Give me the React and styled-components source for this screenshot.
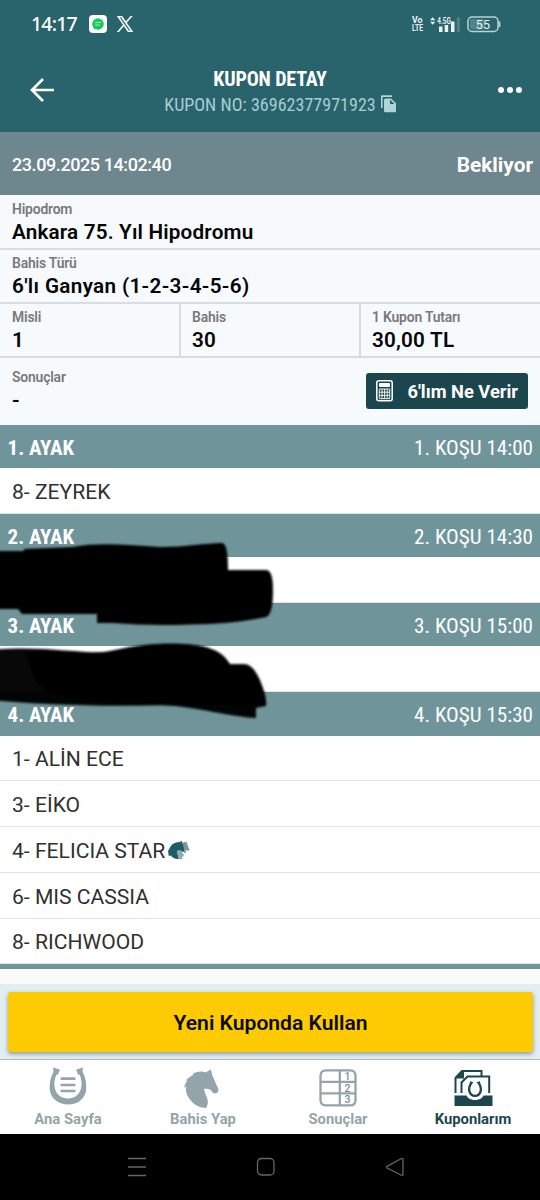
import React from "react";
import styled, { createGlobalStyle } from "styled-components";

const teal = "#29636b";
const band = "#6f959b";
const ink = "#1c464d";
const muted = "#93a5aa";

const GlobalStyle = createGlobalStyle`
  * { box-sizing: border-box; }
  body { margin: 0; background: #000; font-family: Roboto, "Liberation Sans", sans-serif; }
  svg { display: block; flex: none; }
`;

const Screen = styled.main`
  width: 540px;
  height: 1200px;
  display: flex;
  flex-direction: column;
  overflow: hidden;
  background: #fafafa;
`;

const StatusBar = styled.div`
  height: 48px;
  flex: none;
  display: flex;
  align-items: center;
  padding: 0 38px 0 31px;
  background: ${teal};
  color: #fff;
`;
const Clock = styled.span`
  font: 500 19.5px/24px "Noto Sans", sans-serif;
  letter-spacing: -0.8px;
  width: 58px;
  white-space: nowrap;
`;
const StatusIcons = styled.div`
  display: flex;
  align-items: center;
  gap: ${(p) => p.$gap}px;
  margin-left: ${(p) => (p.$end ? "auto" : 0)};
`;

const Header = styled.header`
  height: 84px;
  flex: none;
  display: grid;
  grid-template-columns: 1fr auto 1fr;
  align-items: center;
  padding: 0 18px 0 29px;
  background: ${teal};
`;
const Titles = styled.div`
  display: flex;
  flex-direction: column;
  align-items: center;
  padding-top: 3px;
  margin-left: -11px;
`;
const HeaderEnd = styled.div`
  justify-self: end;
`;
const Condensed = styled.span`
  font-family: "Roboto Condensed", Roboto, sans-serif;
  font-stretch: 75%;
  font-weight: ${(p) => p.$weight || 400};
  font-size: ${(p) => p.$size}px;
  line-height: 26px;
  letter-spacing: ${(p) => p.$track || 0}px;
  color: ${(p) => p.$color || "#fff"};
  white-space: nowrap;
`;
const CouponNo = styled.div`
  display: flex;
  align-items: center;
  gap: 5px;
  margin-right: -21px;
`;

const StateBar = styled.section`
  height: 63px;
  flex: none;
  display: flex;
  justify-content: space-between;
  align-items: center;
  padding: 2px 7px 0 12px;
  background: #6e868d;
  color: #fff;
`;
const Stamp = styled.span`
  font-size: 18px;
  font-weight: 500;
  letter-spacing: -0.42px;
`;
const State = styled.strong`
  font-size: 20.8px;
  font-weight: 700;
`;

const Info = styled.section`
  flex: none;
  padding-top: 1px;
  background: #f6fafc;
`;
const InfoRow = styled.div`
  display: grid;
  grid-template-columns: ${(p) => p.$columns || "1fr"};
  height: 54px;
  border-bottom: 2px solid #d6dee4;
`;
const Cell = styled.div`
  padding: 4px 0 0 12px;
  & + & { border-left: 2px solid #d6dee4; padding-left: 11px; }
`;
const Label = styled.div`
  font-size: 13.9px;
  line-height: 18px;
  font-weight: 600;
  letter-spacing: -0.18px;
  color: #77797b;
`;
const Value = styled.div`
  font-size: 20.7px;
  line-height: 24px;
  margin-top: 2px;
  font-weight: 600;
  letter-spacing: ${(p) => p.$track ?? 0.2}px;
  color: #050505;
`;
const ResultRow = styled.div`
  height: 66.7px;
  display: flex;
  justify-content: space-between;
  align-items: flex-start;
  padding: 10px 12px 0 12px;
`;
const CalcButton = styled.button`
  width: 162px;
  height: 36px;
  margin-top: 5px;
  display: flex;
  align-items: center;
  justify-content: space-between;
  border: 0;
  border-radius: 3px;
  padding: 0 10px 0 9.500px;
  background: ${ink};
  color: #fff;
  font: 700 18.3px Roboto, sans-serif;
  white-space: nowrap;
`;

const Legs = styled.section`
  flex: none;
  display: flex;
  flex-direction: column;
  position: relative;
`;
const LegHead = styled.div`
  height: 43.4px;
  display: flex;
  justify-content: space-between;
  align-items: center;
  padding: 2.600px 7px 0 7.500px;
  background: ${band};
`;
const Horse = styled.div`
  height: 45.75px;
  display: flex;
  align-items: center;
  gap: 3px;
  padding: 2px 0 0 12px;
  border-bottom: 1px solid #dbe5ea;
  background: #fff;
  font-size: 21.1px;
  font-weight: 400;
  color: #303030;
`;
const LegsEnd = styled.div`
  height: 4.5px;
  background: ${band};
`;
const Scribble = styled.svg`
  position: absolute;
  left: 0;
  top: 110px;
`;

const ActionBar = styled.div`
  margin-top: auto;
  height: 75px;
  flex: none;
  padding: 8px 7px 7px 8px;
  background: #e3eef0;
`;
const ActionButton = styled.button`
  width: 100%;
  height: 60px;
  border: 0;
  border-radius: 3px;
  padding-top: 1px;
  background: #fecb02;
  box-shadow: 0 2px 4px rgba(50, 70, 90, 0.5);
  font: 600 21.1px Roboto, sans-serif;
  color: #0c0c0c;
`;
const Tabs = styled.nav`
  height: 75px;
  flex: none;
  display: flex;
  border-top: 1px solid #a9bcc4;
  background: #fff;
`;
const Tab = styled.div`
  flex: 1;
  display: flex;
  flex-direction: column;
  align-items: center;
  padding: 7px 0 0 1px;
  gap: 2px;
  font-size: 14.8px;
  line-height: 18px;
  font-weight: 700;
  color: ${(p) => (p.$active ? ink : muted)};
`;
const TabGlyph = styled.span`
  height: 41px;
`;
const SystemNav = styled.div`
  height: 66px;
  flex: none;
  display: flex;
  justify-content: space-between;
  align-items: center;
  padding: 0 135px 0 127px;
  background: #000;
`;

const ChatIcon = () => (
  <svg width="18" height="18" viewBox="0 0 18 18">
    <rect width="18" height="18" rx="4" fill="#fff" />
    <circle cx="9" cy="9" r="5.8" fill="#18c95c" />
    <path d="M5 14.6 4.4 11l3 2.6z" fill="#18c95c" />
    <path d="M6.2 7.8l6-.5M6.2 10h4.4" stroke="#a9f0c4" strokeWidth="1" />
  </svg>
);
const XIcon = () => (
  <svg width="16" height="16" viewBox="0 0 24 24" fill="#fff" stroke="#fff" strokeWidth="1">
    <path d="M14.2 10.2 22.9 0h-2.1l-7.5 8.8L7.3 0H.3l9.200 13.300L.3 24h2.100l8-9.400L16.800 24h7zM11.400 13.500l-.900-1.300L3.100 1.600h3.200l6 8.500.900 1.300 7.800 11.100h-3.200z" />
  </svg>
);
const VolteIcon = () => (
  <svg width="13" height="26" viewBox="0 0 13 26" fill="#e9f3f3" fontFamily="Roboto, sans-serif" fontWeight="700">
    <text x="1" y="12.300" fontSize="8.300" textLength="10.500" lengthAdjust="spacingAndGlyphs">Vo</text>
    <text x="1" y="20.200" fontSize="8.300" textLength="11" lengthAdjust="spacingAndGlyphs">LTE</text>
  </svg>
);
const SignalIcon = () => (
  <svg width="31" height="20" viewBox="0 -2 31 20" fill="#e9f3f3">
    <path d="M0 4.300 2.700 1.300l2.700 3zM0 5.700h5.400l-2.700 3z" />
    <path d="M9 10.500h3.500v5.500H9zM14.700 9h3.500v7h-3.500zM21 5.500h3.500V16H21z" />
    <path d="M26.800 1.300h3V16h-3z" opacity=".2" />
    <text x="7.300" y="7.500" fontSize="9" fontWeight="700" fontFamily="Roboto, sans-serif" textLength="13.500" lengthAdjust="spacingAndGlyphs">4.5G</text>
  </svg>
);
const BatteryIcon = () => (
  <svg width="35" height="17" viewBox="0 0 35 17">
    <rect x="1" y="1" width="30" height="14.500" rx="4" fill="none" stroke="#b8d4d5" strokeWidth="1.500" />
    <path d="M3 3h14v10.500H5a2 2 0 0 1-2-2z" fill="#4e858c" />
    <path d="M32.500 5.500v5.500" stroke="#b8d4d5" strokeWidth="1.800" />
    <text x="16" y="12.700" textAnchor="middle" fill="#e9f3f3" fontSize="12.500" fontFamily="Roboto, sans-serif" letterSpacing=".3">55</text>
  </svg>
);
const BackIcon = () => (
  <svg width="26" height="26" viewBox="0 0 26 26" fill="none" stroke="#fff" strokeWidth="2.700">
    <path d="M25 13H3M14 2 3 13l11 11" />
  </svg>
);
const MoreIcon = () => (
  <svg width="24" height="8" viewBox="0 0 24 8" fill="#fff">
    <circle cx="3" cy="4" r="3" /><circle cx="12" cy="4" r="3" /><circle cx="21" cy="4" r="3" />
  </svg>
);
const CopyIcon = () => (
  <svg width="16" height="20" viewBox="0 0 16 20" fill="#add5d8">
    <path d="M0 1.500Q0 .3 1.300.3H11v1.600H1.600V13H0z" />
    <path fillRule="evenodd" d="M3 5q0-1.500 1.500-1.500h5.500L15 8.300V16q0 1.300-1.300 1.300H4.500Q3 17.300 3 16zM9 4.700V9h4.500z" />
  </svg>
);
const CalcIcon = () => (
  <svg width="17" height="22" viewBox="0 0 17 22" fill="none" stroke="#fff">
    <rect x=".8" y=".8" width="15.400" height="20" rx="2" strokeWidth="1.500" />
    <path d="M3.500 3.500h10v3h-10z" fill="#fff" />
    <path d="M3.300 9h10.400v9.700H3.300zM3.300 12.200h10.400M3.300 15.400h10.400M6 9v9.700M8.600 9v9.700M11.200 9v9.700" strokeWidth=".9" />
  </svg>
);
const HorsesIcon = () => (
  <svg width="22" height="19" viewBox="0 0 22 19">
    <path d="M0 10 1.500 7.500C3 3.500 6.500 1 11 1.200L13.500 0l1 2c1.500 2 2.500 4 2.500 6.500L15.500 11l-4-1.500C9 10 9.500 13 11 18 7.500 18.500 4.500 17 3 14.500L.8 15z" fill="#1f5c64" />
    <path d="M14.500 2 16.500.7l1.300.8L18.500.3l.8 3 2.200 6-1.500.7-1.700-1.500-.3 3-1.700 1c.2-4-.8-7-1.800-10.500z" fill="#75999e" />
    <path d="M8.700 10.500 11 8.800l2.500 1.400 2.500 4-.5 1.500-1.500-.4.700 3H11.200c-.5-2.500-2-4.500-2.500-7.800z" fill="#8daeb2" />
  </svg>
);
const HomeIcon = () => (
  <svg width="39" height="39" viewBox="0.500 .5 39 39" fill={muted}>
    <path d="m4.500 1 7 2.200L9.300 8.300 8 8.100C3 19 7 32 19.500 32S36 19 31 8.100l-1.300.200L27.500 3.200l7-2.200-.5 4.500C38 12 38 20 37.500 25 35 34 28 38 19.500 38S3.500 33 1.500 25C.5 18 2 11 5 5.500z" />
    <path d="M13.200 12.200h12.600M13.200 18.500h12.600M13.200 24.500h12.600" stroke={muted} strokeWidth="2.700" strokeLinecap="round" />
  </svg>
);
const HorseIcon = () => (
  <svg width="39" height="41" viewBox="2.300 -2.500 39 41" fill={muted}>
    <path d="M28.800 0c1 1.700 1.500 3.500 1.400 5.300 2.300 3.800 3.600 8.800 6 13l.5 1.500c.3 2.200-1 4.200-3.500 4.200-2.600 0-3-2.900-5-3.900-1.700-.8-3.100-.1-5.200-1.300-1.200 3 1.800 7 2.700 10.700.9 3.300.5 6.500-1.500 9-5-.2-11-2.800-14-6.300C6.700 28 3.700 24.800 4.200 16.500L2.500 18.500c0-3 1.700-5.500 3.700-7.500L4 11.500c2-3.500 5.500-4.500 8-6.500l-1.500-.5C14 2.300 20 1 24 3z" />
  </svg>
);
const ResultsIcon = () => (
  <svg width="39" height="41" viewBox="0.500 -1.500 39 41">
    <path d="M7.500 1.900h24q5.500 0 5.500 5.500v24q0 5.500-5.500 5.500h-24Q2 36.900 2 31.400v-24q0-5.500 5.500-5.500zM2 13.400h35M2 24.900h35M21.300 1.900v35" fill="none" stroke={muted} strokeWidth="2.300" />
    <g fill="#7f8d92" fontFamily="Roboto, sans-serif" fontSize="10.500" fontWeight="500" textAnchor="middle">
      <text x="29" y="11.800">1</text><text x="29" y="23.200">2</text><text x="29" y="34.500">3</text>
    </g>
  </svg>
);
const CouponsIcon = () => (
  <svg width="39" height="41" viewBox="0 -1 39 41">
    <g fill="none" stroke={ink} strokeWidth="2">
      <path d="M1.500 25V10L8 3h19.500v4.500M9 3v6.500H2M7.500 25V14.500l6-6h21.700V25" />
    </g>
    <path d="M1 9.500 8.500 2v7.500z" fill={ink} />
    <path d="M.5 27.500H12.500C15 33.500 27 33.500 29.500 27.500H38.500V38H.5z" fill={ink} />
    <path d="m15.800 14.300 1.700.6c-4.500 6-2 13 3.500 13s8-7 3.500-13l1.700-.6" fill="none" stroke={ink} strokeWidth="2.300" />
  </svg>
);

const Redaction = () => (
  <Scribble width="290" height="190" viewBox="0 535 290 190">
    <defs>
      <filter id="soft" x="-10%" y="-10%" width="120%" height="130%"><feGaussianBlur stdDeviation="1.300" /></filter>
    </defs>
    <g filter="url(#soft)">
      <path d="M-8 551H24V549L72 547C100 542 128 545 160 547 186 547 205 543 222 543Q228 543 228 570H266Q273 570 273 590 273 615 266 617 235 624 190 624.500 150 626 112 623H97V614H22L18 609H-8z" />
      <path d="M-8 650C40 645 80 654 110 652 130 647 150 644 180 644 207 645 222 650 230 664H244Q253 664 260 680C264 690 267 698 266 706L256 708V718C230 717 200 707 160 705 100 707 30 704-8 700z" opacity=".97" />
      <path d="M25 651C70 652 95 655 115 650 150 642 185 642 205 647 220 652 224 660 230 666H243Q251 666 260 684L266 705C220 704 190 706 130 705 85 701 45 699 35 680z" />
    </g>
  </Scribble>
);

const legs = [
  { no: 1, time: "14:00", horses: ["8- ZEYREK"] },
  { no: 2, time: "14:30", horses: [""] },
  { no: 3, time: "15:00", horses: [""] },
  { no: 4, time: "15:30", horses: ["1- ALİN ECE", "3- EİKO", "4- FELICIA STAR", "6- MIS CASSIA", "8- RICHWOOD"] },
];

const tabs = [
  ["Ana Sayfa", HomeIcon],
  ["Bahis Yap", HorseIcon],
  ["Sonuçlar", ResultsIcon],
  ["Kuponlarım", CouponsIcon],
];

const Field = ({ label, value, track }) => (
  <Cell>
    <Label>{label}</Label>
    <Value $track={track}>{value}</Value>
  </Cell>
);

export default function App() {
  return (
    <Screen>
      <GlobalStyle />
      <StatusBar>
        <Clock>14:17</Clock>
        <StatusIcons $gap={10}><ChatIcon /><XIcon /></StatusIcons>
        <StatusIcons $gap={6} $end><VolteIcon /><SignalIcon /><BatteryIcon /></StatusIcons>
      </StatusBar>
      <Header>
        <BackIcon />
        <Titles>
          <Condensed $size={20} $weight={700} $track={-0.15}>KUPON DETAY</Condensed>
          <CouponNo>
            <Condensed $size={18} $color="#a6ced2" $track={0.03}>KUPON NO: 36962377971923</Condensed>
            <CopyIcon />
          </CouponNo>
        </Titles>
        <HeaderEnd><MoreIcon /></HeaderEnd>
      </Header>
      <StateBar>
        <Stamp>23.09.2025 14:02:40</Stamp>
        <State>Bekliyor</State>
      </StateBar>
      <Info>
        <InfoRow><Field label="Hipodrom" value="Ankara 75. Yıl Hipodromu" track={0.17} /></InfoRow>
        <InfoRow><Field label="Bahis Türü" value="6'lı Ganyan (1-2-3-4-5-6)" track={0.33} /></InfoRow>
        <InfoRow $columns="179px 180px 1fr">
          <Field label="Misli" value="1" />
          <Field label="Bahis" value="30" />
          <Field label="1 Kupon Tutarı" value="30,00 TL" />
        </InfoRow>
        <ResultRow>
          <div><Label>Sonuçlar</Label><Value>-</Value></div>
          <CalcButton><CalcIcon />6'lım Ne Verir</CalcButton>
        </ResultRow>
      </Info>
      <Legs>
        {legs.map((leg) => (
          <React.Fragment key={leg.no}>
            <LegHead>
              <Condensed $size={21} $weight={700}>{leg.no}. AYAK</Condensed>
              <Condensed $size={21.1}>{leg.no}. KOŞU {leg.time}</Condensed>
            </LegHead>
            {leg.horses.map((name, i) => (
              <Horse key={i}>{name}{name.startsWith("4-") && <HorsesIcon />}</Horse>
            ))}
          </React.Fragment>
        ))}
        <LegsEnd />
        <Redaction />
      </Legs>
      <ActionBar><ActionButton>Yeni Kuponda Kullan</ActionButton></ActionBar>
      <Tabs>
        {tabs.map(([name, Icon], i) => (
          <Tab key={name} $active={i === 3}><TabGlyph><Icon /></TabGlyph>{name}</Tab>
        ))}
      </Tabs>
      <SystemNav>
        <svg width="20" height="20" viewBox="0 0 20 20" stroke="#666" strokeWidth="1.300"><path d="M1 1.500h18M1 10h18M1 18.500h18" /></svg>
        <svg width="20" height="20" viewBox="0 0 20 20" fill="none" stroke="#666" strokeWidth="1.300"><rect x="1.500" y="1.500" width="16.500" height="16.500" rx="4" /></svg>
        <svg width="20" height="20" viewBox="0 0 20 20" fill="none" stroke="#666" strokeWidth="1.300"><path d="M18 3v14q0 2-2 1L2 11q-1-.8 0-1.600L16 1.800Q18 .9 18 3z" /></svg>
      </SystemNav>
    </Screen>
  );
}
